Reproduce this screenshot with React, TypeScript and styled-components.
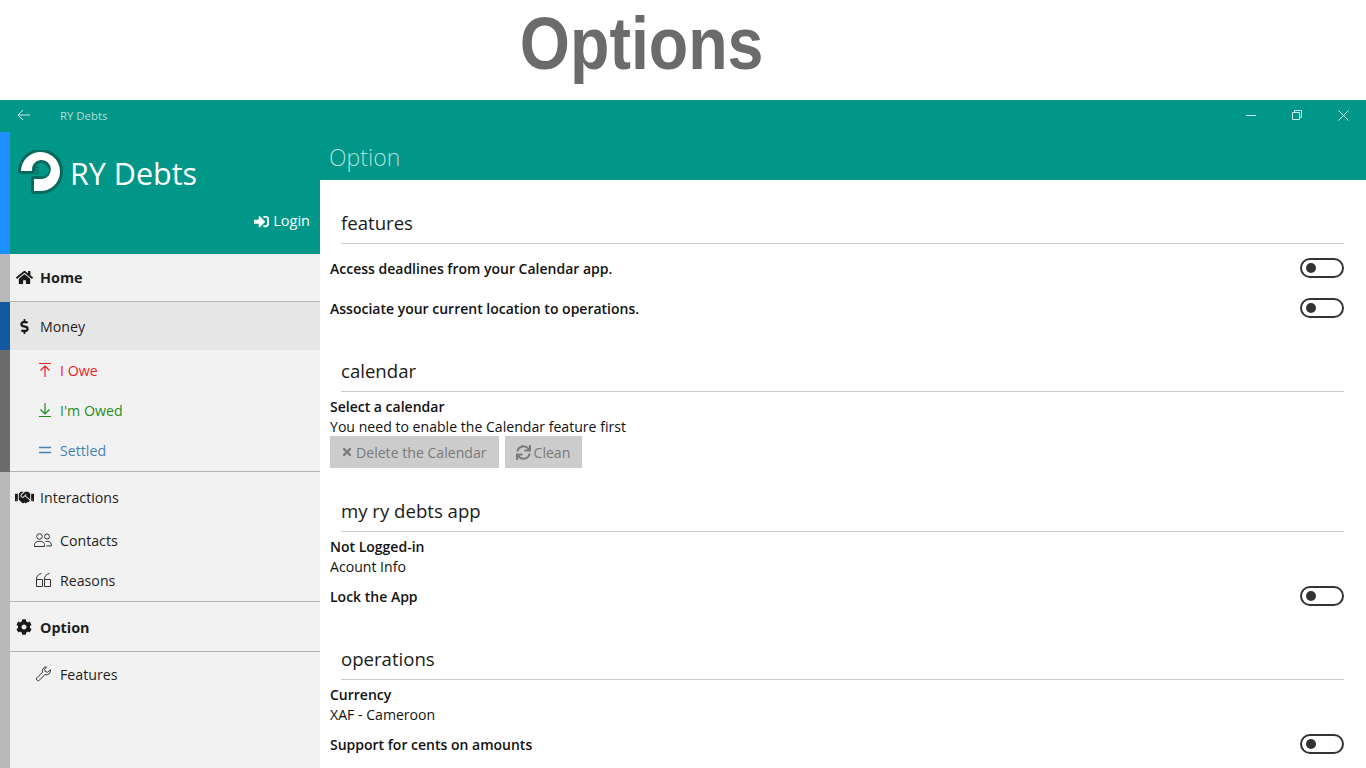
import React, {FC, ReactNode} from 'react';
import styled, {createGlobalStyle} from 'styled-components';
import {FaHome, FaDollarSign, FaHandshake, FaCog, FaSignInAlt, FaTimes, FaSync} from 'react-icons/fa';

const GlobalStyle = createGlobalStyle`
  html, body {
    margin: 0;
    padding: 0;
    background: #fff;
    overflow: hidden;
  }
  body {
    font-family: "Open Sans", "Noto Sans", sans-serif;
  }
  * { box-sizing: border-box; }
`;

const Page = styled.div`
  width: 1366px;
  height: 768px;
  display: flex;
  flex-direction: column;
  overflow: hidden;
`;

const Banner = styled.div`
  height: 100px;
  flex: none;
  display: flex;
  justify-content: center;
  padding-right: 82px;
`;

const BannerTitle = styled.h1`
  margin: 0;
  font-family: "Liberation Sans", Arial, sans-serif;
  font-weight: 700;
  font-size: 75px;
  line-height: 86px;
  color: #6b6b6b;
  transform: scaleX(0.86);
`;

const TitleBar = styled.div`
  height: 32px;
  flex: none;
  padding-bottom: 2px;
  background: #009688;
  display: flex;
  align-items: center;
  color: #b2dfdb;
`;

const BackButton = styled.div`
  width: 48px;
  display: flex;
  align-items: center;
  justify-content: center;
`;

const AppName = styled.span`
  margin-left: 12px;
  font-size: 11.4px;
  flex: 1;
`;

const WinButton = styled.div`
  width: 46px;
  display: flex;
  align-items: center;
  justify-content: center;
`;

const Body = styled.div`
  flex: 1;
  display: flex;
  min-height: 0;
`;

const Sidebar = styled.nav`
  width: 320px;
  flex: none;
  display: flex;
  flex-direction: column;
  background: #f2f2f2;
  border-left: 10px solid #b9b9b9;
`;

const SideHeader = styled.div`
  height: 122px;
  flex: none;
  margin-left: -10px;
  border-left: 10px solid #1e90ff;
  background: #009688;
  display: flex;
  flex-direction: column;
  color: #fff;
`;

const Brand = styled.div`
  display: flex;
  align-items: center;
  gap: 7px;
  padding: 17px 0 0 7px;
  font-size: 30.5px;
  line-height: 48px;
`;

const LoginLink = styled.div`
  display: flex;
  align-items: center;
  justify-content: flex-end;
  gap: 4px;
  margin-top: 14px;
  padding-right: 10px;
  font-size: 14.5px;
  line-height: 20px;
`;

const NavRow = styled.div<{$h: number; $accent?: string; $active?: boolean; $divider?: boolean; $pb?: number; $pt?: number}>`
  height: ${p => p.$h}px;
  flex: none;
  margin-left: -10px;
  padding: ${p => p.$pt || 0}px 0 ${p => p.$pb || 0}px;
  border-left: 10px solid ${p => p.$accent || '#b9b9b9'};
  background: ${p => (p.$active ? '#e6e6e6' : 'transparent')};
  display: flex;
  align-items: center;
  box-shadow: ${p => (p.$divider ? 'inset 0 -1px 0 #b4b4b4' : 'none')};
`;

const NavIcon = styled.span<{$sub?: boolean}>`
  width: ${p => (p.$sub ? 50 : 30)}px;
  height: 20px;
  flex: none;
  display: flex;
  align-items: center;
  justify-content: ${p => (p.$sub ? 'flex-end' : 'center')};
  padding-right: ${p => (p.$sub ? 8 : 2)}px;
  color: #1a1a1a;
`;

const NavLabel = styled.span<{$bold?: boolean; $color?: string}>`
  font-size: ${p => (p.$bold ? 14.4 : 14.2)}px;
  font-weight: ${p => (p.$bold ? 700 : 400)};
  color: ${p => p.$color || '#1f1f1f'};
`;

const Main = styled.main`
  flex: 1;
  display: flex;
  flex-direction: column;
  min-width: 0;
`;

const MainHeader = styled.div`
  height: 48px;
  flex: none;
  background: #009688;
  color: #b2dfdb;
  font-size: 23px;
  font-weight: 300;
  line-height: 50px;
  padding-left: 9px;
`;

const Content = styled.div`
  flex: 1;
  padding: 0 22px 0 10px;
  overflow: hidden;
`;

const Section = styled.section<{$top: number}>`
  padding-top: ${p => p.$top}px;
`;

const SectionTitle = styled.h2`
  margin: 0 0 0 11px;
  height: 32px;
  border-bottom: 1px solid #cccccc;
  font-size: 18.6px;
  font-weight: 400;
  line-height: 22px;
  color: #1a1a1a;
`;

const ToggleRow = styled.div<{$h?: number}>`
  height: ${p => p.$h || 38}px;
  display: flex;
  align-items: center;
  justify-content: space-between;
`;

const StrongText = styled.div`
  font-size: 14px;
  font-weight: 600;
  line-height: 20px;
  color: #111;
`;

const SwitchLabel = styled(StrongText)`
  padding-top: 2px;
`;

const PlainText = styled.div`
  font-size: 14.1px;
  line-height: 20px;
  color: #111;
`;

const Toggle = styled.span`
  width: 44px;
  height: 20px;
  flex: none;
  border: 2px solid #333;
  border-radius: 10px;
  display: flex;
  align-items: center;
  padding-left: 4px;
  &::before {
    content: '';
    width: 10px;
    height: 10px;
    border-radius: 50%;
    background: #333;
  }
`;

const ButtonRow = styled.div`
  display: flex;
  gap: 6px;
  margin-top: -1px;
`;

const GhostButton = styled.div`
  height: 32px;
  padding: 0 12px 0 11px;
  background: #cccccc;
  color: #7a7a7a;
  display: flex;
  align-items: center;
  gap: 3px;
  font-size: 14.1px;
`;

const Block = styled.div<{$top?: number}>`
  margin-top: ${p => p.$top || 0}px;
`;

const ArrowUpIcon: FC = () => (
  <svg width="14" height="16" viewBox="0 0 14 16" fill="none" stroke="#f21c1c" strokeWidth="1.2">
    <path d="M1 1.5h12M7 15V4M2.5 8.5L7 4l4.5 4.5" />
  </svg>
);

const ArrowDownIcon: FC = () => (
  <svg width="14" height="16" viewBox="0 0 14 16" fill="none" stroke="#1c8f1c" strokeWidth="1.2">
    <path d="M1 14.5h12M7 1v11M2.5 7.5L7 12l4.5-4.5" />
  </svg>
);

const EqualIcon: FC = () => (
  <svg width="14" height="16" viewBox="0 0 14 16" fill="none" stroke="#4682b4" strokeWidth="1.5">
    <path d="M1 5.5h12M1 10.5h12" />
  </svg>
);

const ContactsIcon: FC = () => (
  <svg width="19" height="15" viewBox="-1 0 19 15" fill="none" stroke="#333" strokeWidth="1">
    <circle cx="5.5" cy="3.5" r="2.8" />
    <circle cx="13" cy="3.5" r="2.5" />
    <path d="M.5 13.5v-2c0-2 2-3.2 5-3.2s5 1.2 5 3.2v2zM11.5 8.4c3.4-.4 5.8.9 5.8 2.9v1.6h-5" />
  </svg>
);

const QuoteIcon: FC = () => (
  <svg width="17" height="15" viewBox="-1 0 17 15" fill="none" stroke="#333" strokeWidth="1">
    <path d="M.5 13.5V6C.5 3.200 2 1.300 5.500.5M.5 6.500h6v7H.5M8.500 13.500V6c0-2.800 1.500-4.700 5-5.500M8.500 6.500h6v7h-6" />
  </svg>
);

const WrenchIcon: FC = () => (
  <svg width="16" height="16" viewBox="0 0 16 16" fill="none" stroke="#333" strokeWidth="1">
    <path d="M10.5.9a4 4 0 0 0-4 5.3L.9 11.8a1.900 1.900 0 0 0 0 2.300c.7.8 1.700.8 2.400.1l5.700-5.600a4 4 0 0 0 5.300-4.800l-2.700 2.400-2.400-.7-.6-2.300z" />
  </svg>
);

const LOGO_SHAPE = 'M4 21 A19.500 19.500 0 1 1 23 41 L17 41 L17 29 L25 29 A9.500 9.500 0 1 0 15 21 Z';

const Logo: FC = () => (
  <svg width="46" height="46" viewBox="0 0 46 46">
    <path d={LOGO_SHAPE} fill="#08695f" stroke="#08695f" strokeWidth="6" strokeLinejoin="round" />
    <path d="M18 21 A7 7 0 0 1 32 21 A7 7 0 0 1 25 26 L18 26 Z" fill="#009688" />
    <path d={LOGO_SHAPE} fill="#fff" />
    <text x="20" y="24" fontSize="11" fill="#08695f" textAnchor="middle">$</text>
  </svg>
);

const Switch: FC<{children: ReactNode; h?: number}> = ({children, h}) => (
  <ToggleRow $h={h}>
    <SwitchLabel>{children}</SwitchLabel>
    <Toggle />
  </ToggleRow>
);

const App: FC = () => {
  return (
    <Page>
      <GlobalStyle />
      <Banner>
        <BannerTitle>Options</BannerTitle>
      </Banner>
      <TitleBar>
        <BackButton>
          <svg width="14" height="12" viewBox="0 0 14 12" fill="none" stroke="#cfeeea" strokeWidth="1">
            <path d="M13 6H1M6 1L1 6l5 5" />
          </svg>
        </BackButton>
        <AppName>RY Debts</AppName>
        <WinButton>
          <svg width="10" height="10" viewBox="0 0 10 10" fill="none" stroke="#cfeeea"><path d="M0 5.500h10" /></svg>
        </WinButton>
        <WinButton>
          <svg width="10" height="10" viewBox="0 0 10 10" fill="none" stroke="#cfeeea"><path d="M.5 2.500h7v7h-7zM2.500 2.500v-2h7v7h-2" /></svg>
        </WinButton>
        <WinButton>
          <svg width="11" height="11" viewBox="0 0 11 11" fill="none" stroke="#cfeeea"><path d="M.5.5l10 10M10.500.5l-10 10" /></svg>
        </WinButton>
      </TitleBar>
      <Body>
        <Sidebar>
          <SideHeader>
            <Brand>
              <Logo />
              RY Debts
            </Brand>
            <LoginLink>
              <FaSignInAlt size={15} />
              Login
            </LoginLink>
          </SideHeader>
          <NavRow $h={48} $pb={2} $divider>
            <NavIcon><FaHome size={17} /></NavIcon>
            <NavLabel $bold>Home</NavLabel>
          </NavRow>
          <NavRow $h={48} $accent="#1159a0" $active>
            <NavIcon><FaDollarSign size={15} /></NavIcon>
            <NavLabel>Money</NavLabel>
          </NavRow>
          <NavRow $h={40} $accent="#6b6b6b">
            <NavIcon $sub><ArrowUpIcon /></NavIcon>
            <NavLabel $color="#f21c1c">I Owe</NavLabel>
          </NavRow>
          <NavRow $h={40} $accent="#6b6b6b">
            <NavIcon $sub><ArrowDownIcon /></NavIcon>
            <NavLabel $color="#1c8f1c">I'm Owed</NavLabel>
          </NavRow>
          <NavRow $h={42} $pb={2} $accent="#6b6b6b" $divider>
            <NavIcon $sub><EqualIcon /></NavIcon>
            <NavLabel $color="#4682b4">Settled</NavLabel>
          </NavRow>
          <NavRow $h={48} $pt={2}>
            <NavIcon><FaHandshake size={19} /></NavIcon>
            <NavLabel>Interactions</NavLabel>
          </NavRow>
          <NavRow $h={40}>
            <NavIcon $sub><ContactsIcon /></NavIcon>
            <NavLabel>Contacts</NavLabel>
          </NavRow>
          <NavRow $h={42} $pb={2} $divider>
            <NavIcon $sub><QuoteIcon /></NavIcon>
            <NavLabel>Reasons</NavLabel>
          </NavRow>
          <NavRow $h={50} $divider>
            <NavIcon><FaCog size={16} /></NavIcon>
            <NavLabel $bold>Option</NavLabel>
          </NavRow>
          <NavRow $h={44}>
            <NavIcon $sub><WrenchIcon /></NavIcon>
            <NavLabel>Features</NavLabel>
          </NavRow>
        </Sidebar>
        <Main>
          <MainHeader>Option</MainHeader>
          <Content>
            <Section $top={32}>
              <SectionTitle>features</SectionTitle>
              <Switch h={48}>Access deadlines from your Calendar app.</Switch>
              <Switch h={32}>Associate your current location to operations.</Switch>
            </Section>
            <Section $top={36}>
              <SectionTitle>calendar</SectionTitle>
              <Block $top={5}>
                <StrongText>Select a calendar</StrongText>
                <PlainText>You need to enable the Calendar feature first</PlainText>
                <ButtonRow>
                  <GhostButton><FaTimes size={12} />Delete the Calendar</GhostButton>
                  <GhostButton><FaSync size={15} />Clean</GhostButton>
                </ButtonRow>
              </Block>
            </Section>
            <Section $top={32}>
              <SectionTitle>my ry debts app</SectionTitle>
              <Block $top={5}>
                <StrongText>Not Logged-in</StrongText>
                <PlainText>Acount Info</PlainText>
              </Block>
              <Switch>Lock the App</Switch>
            </Section>
            <Section $top={33}>
              <SectionTitle>operations</SectionTitle>
              <Block $top={5}>
                <StrongText>Currency</StrongText>
                <PlainText>XAF - Cameroon</PlainText>
              </Block>
              <Switch>Support for cents on amounts</Switch>
            </Section>
          </Content>
        </Main>
      </Body>
    </Page>
  );
};

export default App;
